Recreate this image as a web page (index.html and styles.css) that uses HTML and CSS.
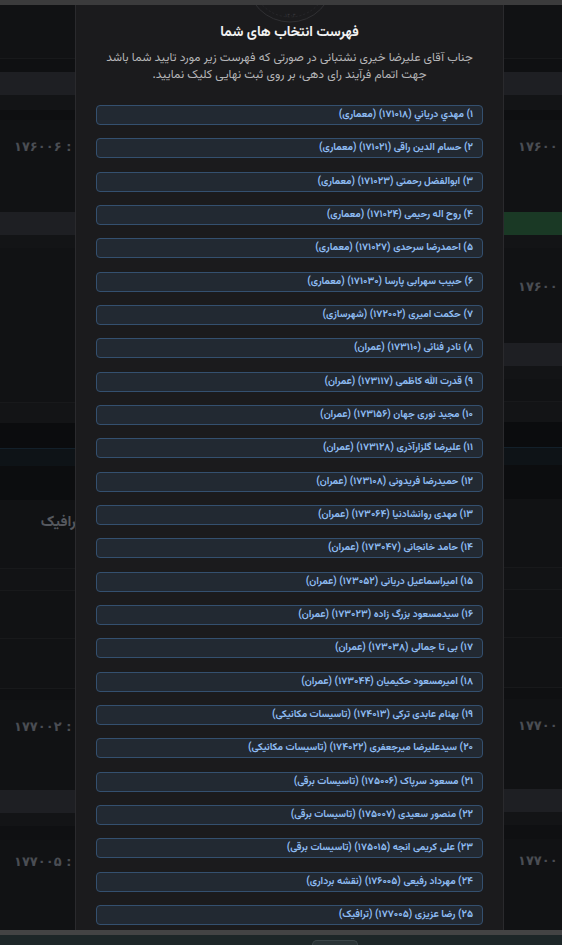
FILE: index.html
```html
<!DOCTYPE html>
<html lang="fa">
<head>
<meta charset="utf-8">
<title>فهرست انتخاب های شما</title>
<link rel="stylesheet" href="styles.css">
</head>
<body>
<div class="topstrip"></div>
<main class="page">
  <section class="col col-left">
    <div class="r r-top"></div>
    <div class="r r-a"></div>
    <div class="r r-band"></div>
    <div class="r r-b"></div>
    <div class="r r-c"></div>
    <div class="r r-main1"><span class="code">۱۷۶۰۰۶ :</span></div>
    <div class="r r-band"></div>
    <div class="r r-b2"></div>
    <div class="r r-main2"></div>
    <div class="r r-d"></div>
    <div class="r r-e"></div>
    <div class="r r-f"></div>
    <div class="r r-g"></div>
    <div class="r r-main3"><span class="word">ترافیک</span></div>
    <div class="r r-h"></div>
    <div class="r r-i"></div>
    <div class="r r-j"></div>
    <div class="r r-k"></div>
    <div class="r r-main4"><span class="code">۱۷۷۰۰۲ :</span></div>
    <div class="r r-band"></div>
    <div class="r r-l"></div>
    <div class="r r-m"></div>
    <div class="r r-main5"><span class="code">۱۷۷۰۰۵ :</span></div>
  </section>
  <section class="col col-right">
    <div class="r r-top"></div>
    <div class="r r-a"></div>
    <div class="r r-band"></div>
    <div class="r r-b"></div>
    <div class="r r-c"></div>
    <div class="r r-main1"><span class="code">۱۷۶۰۰</span></div>
    <div class="r r-green"></div>
    <div class="r r-b2"></div>
    <div class="r r-main2a"><span class="code">۱۷۶۰۰</span></div>
    <div class="r r-band"></div>
    <div class="r r-b2"></div>
    <div class="r r-main2b"></div>
    <div class="r r-d"></div>
    <div class="r r-e"></div>
    <div class="r r-f"></div>
    <div class="r r-g"></div>
    <div class="r r-main3"></div>
    <div class="r r-h"></div>
    <div class="r r-i"></div>
    <div class="r r-j"></div>
    <div class="r r-k"></div>
    <div class="r r-main4"><span class="code">۱۷۷۰۰</span></div>
    <div class="r r-band"></div>
    <div class="r r-l"></div>
    <div class="r r-m"></div>
    <div class="r r-main5"><span class="code">۱۷۷۰۰</span></div>
  </section>
</main>
<footer class="footer">
  <div class="footer-line"></div>
  <div class="footer-bar"><span class="footer-btn"></span></div>
</footer>

<div class="modal" dir="rtl">
  <div class="seal">
    <svg width="110" height="18" viewBox="0 0 110 18">
      <circle cx="55" cy="-26" r="43" fill="none" stroke="#303033" stroke-width="1"/>
      <circle cx="55" cy="-26" r="38" fill="none" stroke="#2b2b2e" stroke-width="0.8" stroke-dasharray="2 2"/>
      <text x="55" y="12" text-anchor="middle" class="seal-text">۱۴۰۳</text>
    </svg>
  </div>
  <h1 class="title">فهرست انتخاب های شما</h1>
  <p class="desc">جناب آقای علیرضا خیری نشتبانی در صورتی که فهرست زیر مورد تایید شما باشد<br>جهت اتمام فرآیند رای دهی، بر روی ثبت نهایی کلیک نمایید.</p>
  <ul class="list">
    <li class="item">۱) مهدي درياني (۱۷۱۰۱۸) (معماری)</li>
    <li class="item">۲) حسام الدین راقی (۱۷۱۰۲۱) (معماری)</li>
    <li class="item">۳) ابوالفضل رحمتی (۱۷۱۰۲۳) (معماری)</li>
    <li class="item">۴) روح اله رحیمی (۱۷۱۰۲۴) (معماری)</li>
    <li class="item">۵) احمدرضا سرحدی (۱۷۱۰۲۷) (معماری)</li>
    <li class="item">۶) حبیب سهرابی پارسا (۱۷۱۰۳۰) (معماری)</li>
    <li class="item">۷) حکمت امیری (۱۷۲۰۰۲) (شهرسازی)</li>
    <li class="item">۸) نادر فنائی (۱۷۳۱۱۰) (عمران)</li>
    <li class="item">۹) قدرت الله کاظمی (۱۷۳۱۱۷) (عمران)</li>
    <li class="item">۱۰) مجید نوری جهان (۱۷۳۱۵۶) (عمران)</li>
    <li class="item">۱۱) علیرضا گلزارآذری (۱۷۳۱۲۸) (عمران)</li>
    <li class="item">۱۲) حمیدرضا فریدونی (۱۷۳۱۰۸) (عمران)</li>
    <li class="item">۱۳) مهدی روانشادنیا (۱۷۳۰۶۴) (عمران)</li>
    <li class="item">۱۴) حامد خانجانی (۱۷۳۰۴۷) (عمران)</li>
    <li class="item">۱۵) امیراسماعیل دریانی (۱۷۳۰۵۲) (عمران)</li>
    <li class="item">۱۶) سیدمسعود بزرگ زاده (۱۷۳۰۲۳) (عمران)</li>
    <li class="item">۱۷) بی تا جمالی (۱۷۳۰۳۸) (عمران)</li>
    <li class="item">۱۸) امیرمسعود حکیمیان (۱۷۳۰۴۴) (عمران)</li>
    <li class="item">۱۹) بهنام عابدی ترکی (۱۷۴۰۱۳) (تاسیسات مکانیکی)</li>
    <li class="item">۲۰) سیدعلیرضا میرجعفری (۱۷۴۰۲۲) (تاسیسات مکانیکی)</li>
    <li class="item">۲۱) مسعود سرپاک (۱۷۵۰۰۶) (تاسیسات برقی)</li>
    <li class="item">۲۲) منصور سعیدی (۱۷۵۰۰۷) (تاسیسات برقی)</li>
    <li class="item">۲۳) علی کریمی انجه (۱۷۵۰۱۵) (تاسیسات برقی)</li>
    <li class="item">۲۴) مهرداد رفیعی (۱۷۶۰۰۵) (نقشه برداری)</li>
    <li class="item">۲۵) رضا عزیزی (۱۷۷۰۰۵) (ترافیک)</li>
  </ul>
</div>
</body>
</html>
```

FILE: styles.css
```css
* { box-sizing: border-box; }
html, body {
  margin: 0;
  padding: 0;
  width: 562px;
  height: 945px;
  overflow: hidden;
  background: #111214;
  font-family: "Vazirmatn", "Noto Sans Arabic", "Noto Kufi Arabic", "DejaVu Sans Condensed", "DejaVu Sans", sans-serif;
}
body {
  display: flex;
  flex-direction: column;
}
.topstrip {
  height: 5px;
  flex: none;
  background: #3b3b3c;
}
.page {
  height: 925px;
  flex: none;
  display: flex;
  overflow: hidden;
}
.col {
  flex: none;
  display: flex;
  flex-direction: column;
}
.col-left { width: 503px; }
.col-right { width: 59px; overflow: hidden; }
.r { flex: none; background: #111214; }
.r-top { height: 53px; background: #111214; }
.r-a { height: 14px; background: #0f1012; border-top: 1px solid #18191b; }
.r-band { height: 23px; background: #1e1f23; }
.r-b { height: 15px; background: #131416; }
.r-c { height: 10px; background: #0e0f11; }
.r-main1 { height: 92px; padding-top: 17px; }
.r-green { height: 23px; background: #1a3925; }
.r-b2 { height: 13px; background: #131416; }
.r-main2 { height: 154px; }
.r-main2a { height: 95px; padding-top: 29px; }
.r-main2b { height: 22px; }
.r-d { height: 21px; background: #131416; border-top: 1px solid #18191b; }
.r-e { height: 25px; background: #0b0c0e; }
.r-f { height: 18px; background: #0e1317; border-top: 1px solid #13202a; }
.r-g { height: 34px; background: #0c0d0f; }
.r-main3 { height: 68px; padding-top: 12px; }
.r-h { height: 22px; background: #121315; border-top: 1px solid #18191b; }
.r-i { height: 48px; border-top: 1px solid #18191b; }
.r-j { height: 50px; border-top: 1px solid #18191b; }
.r-k { height: 12px; background: #0f1012; border-top: 1px solid #18191b; }
.r-main4 { height: 90px; padding-top: 17px; }
.r-l { height: 13px; background: #131416; }
.r-m { height: 14px; background: #0f1012; }
.r-main5 { height: 90px; padding-top: 12px; }

.code {
  display: block;
  direction: ltr;
  font-family: "DejaVu Sans", sans-serif;
  font-weight: bold;
  font-size: 13px;
  line-height: 20px;
  letter-spacing: 2.5px;
  color: #4a4d53;
  white-space: nowrap;
}
.col-left .code { padding-left: 14px; }
.col-right .code { padding-left: 15px; }
.word {
  display: block;
  direction: rtl;
  text-align: right;
  padding-right: 422px;
  font-weight: bold;
  font-size: 15px;
  line-height: 22px;
  color: #55585e;
  white-space: nowrap;
}

.footer {
  flex: none;
  height: 15px;
  display: flex;
  flex-direction: column;
}
.footer-line { height: 5px; background: #434344; }
.footer-bar {
  height: 10px;
  background: #1d2628;
  padding-left: 312px;
  padding-top: 5px;
}
.footer-btn {
  display: block;
  width: 46px;
  height: 5px;
  background: #2a3336;
  border: 1px solid #3b4548;
  border-bottom: none;
  border-radius: 6px 6px 0 0;
}

.modal {
  position: fixed;
  left: 75px;
  top: 5px;
  width: 429px;
  height: 925px;
  background: #1b1b1d;
  border-left: 1px solid #2a2a2d;
  border-right: 1px solid #2a2a2d;
  overflow: hidden;
  padding: 0 20px;
  display: flex;
  flex-direction: column;
}
.seal {
  height: 18px;
  flex: none;
  display: flex;
  justify-content: center;
}
.seal-text { font-size: 5px; fill: #3a3a3d; font-family: "DejaVu Sans", sans-serif; }
.title {
  margin: 0;
  font-size: 14px;
  line-height: 20px;
  font-weight: bold;
  color: #f2f2f2;
  text-align: center;
}
.desc {
  margin: 7px 0 0;
  font-size: 12px;
  line-height: 17px;
  color: #b5b5b7;
  text-align: center;
  white-space: nowrap;
}
.list {
  list-style: none;
  margin: 21px 0 0;
  padding: 0;
  display: flex;
  flex-direction: column;
  gap: 13.333px;
}
.item {
  flex: none;
  height: 20px;
  border: 1px solid #34506f;
  border-radius: 4px;
  background: #222932;
  color: #8ebcf3;
  font-size: 10px;
  font-weight: bold;
  line-height: 18px;
  padding: 0 9px;
  text-align: right;
  white-space: nowrap;
}
```
